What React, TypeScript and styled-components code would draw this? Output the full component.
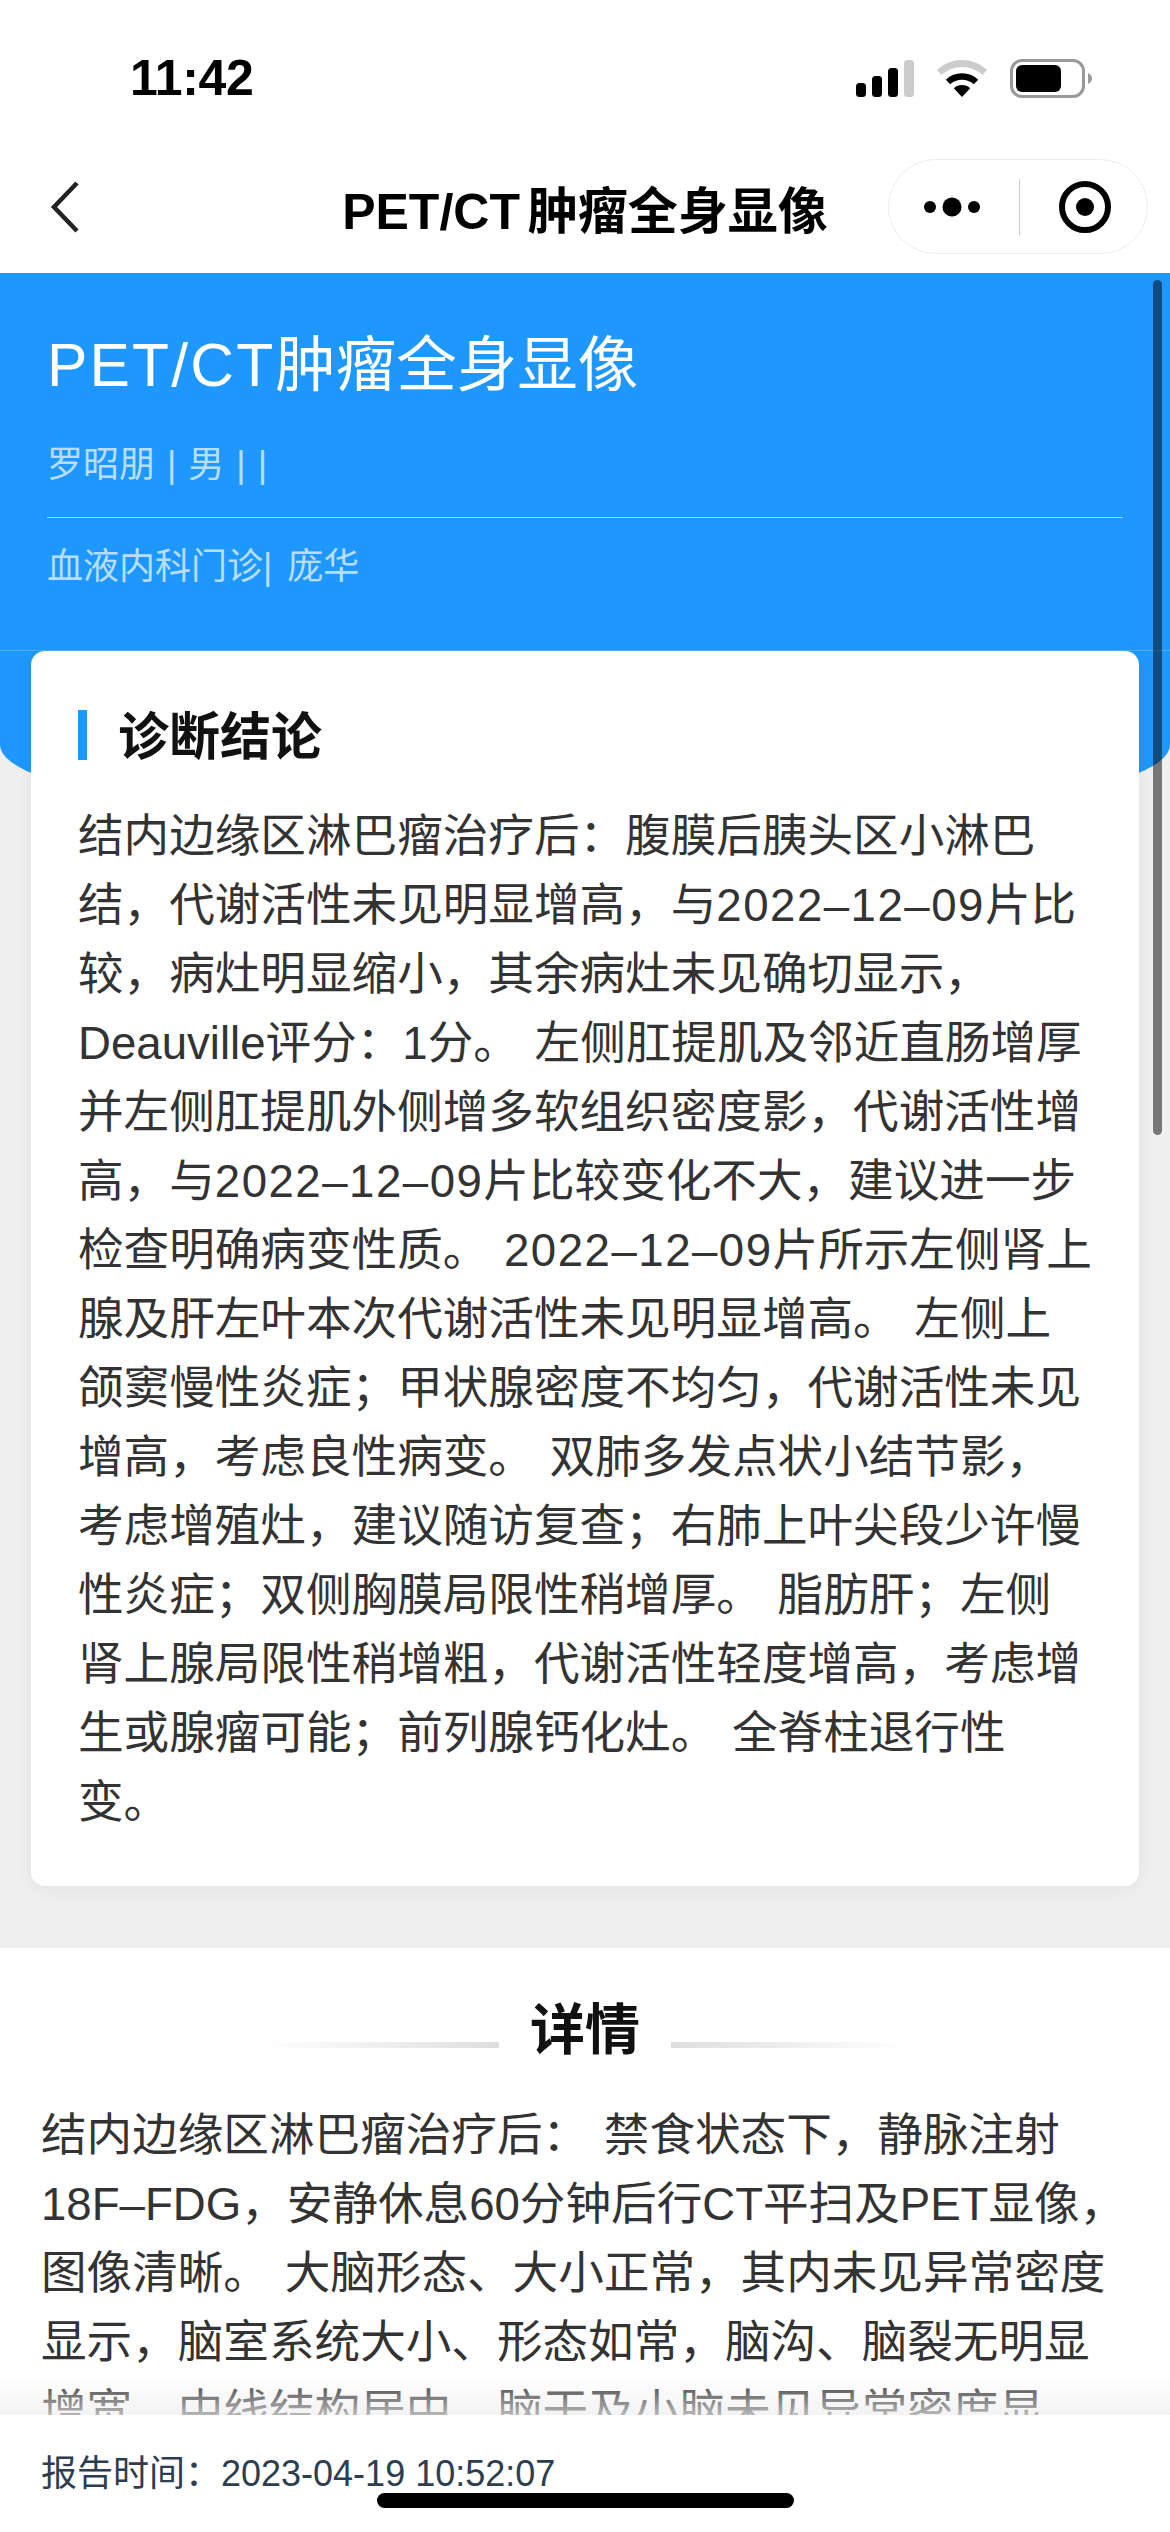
import * as React from 'react';
import styled, { createGlobalStyle } from 'styled-components';

const GlobalStyle = createGlobalStyle`
    html, body {
        margin: 0;
        padding: 0;
        background: #fff;
    }
`;

const Page = styled.div`
    display: flex;
    flex-direction: column;
    width: 1170px;
    height: 2532px;
    overflow: hidden;
    position: relative;
    background: #fff;
    font-family: 'Liberation Sans', 'Noto Sans CJK SC', sans-serif;
`;

const StatusBar = styled.div`
    display: flex;
    flex: none;
    align-items: center;
    justify-content: space-between;
    height: 156px;
    padding: 0 78px 0 130px;
`;

const Clock = styled.span`
    font-size: 50px;
    font-weight: 700;
    letter-spacing: -0.3px;
    color: #000;
`;

const StatusIcons = styled.div`
    display: flex;
    align-items: center;
    gap: 23px;
`;

const NavBar = styled.div`
    display: flex;
    flex: none;
    align-items: center;
    justify-content: space-between;
    position: relative;
    box-sizing: border-box;
    height: 117px;
    padding: 0 22px 16px 50px;
`;

const NavTitle = styled.div`
    position: absolute;
    top: 0;
    left: 0;
    right: 0;
    bottom: 16px;
    display: flex;
    align-items: center;
    justify-content: center;
    font-size: 50px;
    font-weight: 700;
    color: #000;
    white-space: pre;
    word-spacing: -6px;
`;

const Capsule = styled.div`
    display: flex;
    align-items: center;
    box-sizing: border-box;
    width: 260px;
    height: 95px;
    padding-left: 35px;
    border: 1px solid #ececec;
    border-radius: 48px;
    background: #fff;
    z-index: 1;
`;

const CapsuleLine = styled.div`
    width: 1px;
    height: 56px;
    margin: 0 39px;
    background: #cfcfcf;
`;

const Scroll = styled.div`
    flex: 1;
    min-height: 0;
    overflow: hidden;
    position: relative;
    background: #efefef;
`;

const ScrollThumb = styled.div`
    position: absolute;
    top: 7px;
    right: 8px;
    width: 9px;
    height: 855px;
    border-radius: 5px;
    background: rgba(0, 0, 0, 0.5);
`;

const Hero = styled.header`
    box-sizing: border-box;
    height: 559px;
    background: #1e98ff;
    border-radius: 0 0 50% 50% / 0 0 87px 87px;
`;

const HeroHead = styled.div`
    box-sizing: border-box;
    height: 378px;
    padding: 56px 47px 0 47px;
    border-bottom: 1px solid rgba(255, 255, 255, 0.22);
`;

const HeroTitle = styled.h1`
    margin: 0;
    font-size: 60.5px;
    line-height: 72px;
    font-weight: 400;
    color: #fff;
`;

const HeroTitleLatin = styled.span`
    letter-spacing: 2.2px;
`;

const HeroInfo = styled.div`
    font-size: 36px;
    line-height: 50px;
    word-spacing: 2px;
    color: rgba(255, 255, 255, 0.7);
`;

const PatientRow = styled(HeroInfo)`
    margin-top: 39px;
    padding-bottom: 27px;
    border-bottom: 1px solid rgba(255, 255, 255, 0.6);
`;

const DeptRow = styled(HeroInfo)`
    margin-top: 24px;
    word-spacing: 5px;
`;

const Card = styled.section`
    position: relative;
    box-sizing: border-box;
    margin: -181px 31px 62px;
    padding: 59px 47px 49px;
    border-radius: 14px;
    background: #fff;
    box-shadow: 0 4px 18px rgba(0, 0, 0, 0.05);
`;

const CardHeading = styled.h2`
    display: flex;
    align-items: center;
    gap: 31px;
    margin: 0 0 42px;
    font-size: 51px;
    line-height: 50px;
    font-weight: 700;
    color: #111;

    &::before {
        content: '';
        width: 9px;
        height: 50px;
        background: #1e98ff;
    }
`;

const CardHeadingText = styled.span`
    position: relative;
    top: 3px;
`;

const Body = styled.p`
    margin: 0;
    font-size: 45.6px;
    line-height: 69px;
    word-spacing: 3px;
    color: #333;
    white-space: pre;
`;

const DateText = styled.span`
    letter-spacing: 1.5px;
`;

const Details = styled.section`
    padding: 48px 41px 0;
    background: #fff;
`;

const DetailsHeading = styled.div`
    display: flex;
    align-items: center;
    justify-content: center;
    gap: 31px;
    margin-bottom: 37px;
    font-size: 55px;
    line-height: 68px;
    font-weight: 700;
    color: #111;
`;

const HeadingRule = styled.span<{ $flip?: boolean }>`
    width: 236px;
    height: 6px;
    margin-top: 30px;
    background: linear-gradient(
        ${props => (props.$flip ? 'to left' : 'to right')},
        rgba(221, 221, 221, 0),
        #dedede
    );
`;

const Footer = styled.footer`
    position: relative;
    flex: none;
    box-sizing: border-box;
    height: 117px;
    padding: 34px 41px 0;
    background: #fff;
    font-size: 36px;
    line-height: 50px;
    color: #2c3e50;

    &::before {
        content: '';
        position: absolute;
        left: 0;
        right: 0;
        bottom: 100%;
        height: 40px;
        background: linear-gradient(
            to bottom,
            rgba(255, 255, 255, 0),
            rgba(238, 238, 238, 0.7)
        );
    }
`;

const HomeIndicator = styled.div`
    position: absolute;
    left: 377px;
    bottom: 24px;
    width: 417px;
    height: 15px;
    border-radius: 8px;
    background: #000;
`;

const conclusion = [
    '结内边缘区淋巴瘤治疗后：腹膜后胰头区小淋巴',
    '结，代谢活性未见明显增高，与2022–12–09片比',
    '较，病灶明显缩小，其余病灶未见确切显示，',
    'Deauville评分：1分。 左侧肛提肌及邻近直肠增厚',
    '并左侧肛提肌外侧增多软组织密度影，代谢活性增',
    '高，与2022–12–09片比较变化不大，建议进一步',
    '检查明确病变性质。 2022–12–09片所示左侧肾上',
    '腺及肝左叶本次代谢活性未见明显增高。 左侧上',
    '颌窦慢性炎症；甲状腺密度不均匀，代谢活性未见',
    '增高，考虑良性病变。 双肺多发点状小结节影，',
    '考虑增殖灶，建议随访复查；右肺上叶尖段少许慢',
    '性炎症；双侧胸膜局限性稍增厚。 脂肪肝；左侧',
    '肾上腺局限性稍增粗，代谢活性轻度增高，考虑增',
    '生或腺瘤可能；前列腺钙化灶。 全脊柱退行性',
    '变。',
];

const details = [
    '结内边缘区淋巴瘤治疗后： 禁食状态下，静脉注射',
    '18F–FDG，安静休息60分钟后行CT平扫及PET显像，',
    '图像清晰。 大脑形态、大小正常，其内未见异常密度',
    '显示，脑室系统大小、形态如常，脑沟、脑裂无明显',
    '增宽，中线结构居中，脑干及小脑未见异常密度显',
];

// dates run a little wider than the rest of the latin text
const Lines: React.FC<{ lines: string[] }> = ({ lines }) => (
    <Body>
        {lines.map(line => (
            <React.Fragment key={line}>
                {line.split(/(\d{4}–\d{2}–\d{2})/).map((part, i) =>
                    i % 2 ? <DateText key={i}>{part}</DateText> : part
                )}
                <br />
            </React.Fragment>
        ))}
    </Body>
);

const SignalIcon = () => (
    <svg width="58" height="37" viewBox="0 0 58 37">
        <rect x="0" y="23" width="10" height="14" rx="3.5" fill="#000" />
        <rect x="16" y="16" width="10" height="21" rx="3.5" fill="#000" />
        <rect x="32" y="8" width="10" height="29" rx="3.5" fill="#000" />
        <rect x="48" y="0" width="10" height="37" rx="3.5" fill="#ccc" />
    </svg>
);

const WifiIcon = () => (
    <svg width="50" height="37" viewBox="0 0 50 37" fill="none">
        <path d="M2.2 12.5A33.5 33.5 0 0 1 47.8 12.5" stroke="#ccc" strokeWidth="7" />
        <path d="M11 22A20.5 20.5 0 0 1 39 22" stroke="#000" strokeWidth="6.5" />
        <path d="M25 37L16.8 28.2A12 12 0 0 1 33.2 28.2Z" fill="#000" />
    </svg>
);

const BatteryIcon = () => (
    <svg width="82" height="39" viewBox="0 0 82 39">
        <rect x="1.5" y="1.5" width="72" height="36" rx="10.5" fill="none" stroke="#999" strokeWidth="3" />
        <rect x="6" y="6" width="45" height="27" rx="6" fill="#000" />
        <path d="M78 14C80.5 15 82 17 82 19.5C82 22 80.5 24 78 25Z" fill="#999" />
    </svg>
);

const BackIcon = () => (
    <svg width="30" height="52" viewBox="0 0 30 52" fill="none">
        <path d="M27 2L4 26L27 50" stroke="#222" strokeWidth="4.5" />
    </svg>
);

const MoreIcon = () => (
    <svg width="56" height="20" viewBox="0 0 56 20">
        <circle cx="6" cy="10" r="6" fill="#000" />
        <circle cx="28" cy="10" r="9.5" fill="#000" />
        <circle cx="50" cy="10" r="6" fill="#000" />
    </svg>
);

const TargetIcon = () => (
    <svg width="52" height="52" viewBox="0 0 52 52">
        <circle cx="26" cy="26" r="23" fill="none" stroke="#000" strokeWidth="6" />
        <circle cx="26" cy="26" r="9" fill="#000" />
    </svg>
);

const App: React.FC = () => {
    return (
        <Page>
            <GlobalStyle />
            <StatusBar>
                <Clock>11:42</Clock>
                <StatusIcons>
                    <SignalIcon />
                    <WifiIcon />
                    <BatteryIcon />
                </StatusIcons>
            </StatusBar>
            <NavBar>
                <BackIcon />
                <NavTitle>PET/CT 肿瘤全身显像</NavTitle>
                <Capsule>
                    <MoreIcon />
                    <CapsuleLine />
                    <TargetIcon />
                </Capsule>
            </NavBar>
            <Scroll>
                <Hero>
                    <HeroHead>
                        <HeroTitle>
                            <HeroTitleLatin>PET/CT</HeroTitleLatin>肿瘤全身显像
                        </HeroTitle>
                        <PatientRow>罗昭朋 | 男 | |</PatientRow>
                        <DeptRow>血液内科门诊| 庞华</DeptRow>
                    </HeroHead>
                </Hero>
                <Card>
                    <CardHeading>
                        <CardHeadingText>诊断结论</CardHeadingText>
                    </CardHeading>
                    <Lines lines={conclusion} />
                </Card>
                <Details>
                    <DetailsHeading>
                        <HeadingRule />
                        详情
                        <HeadingRule $flip />
                    </DetailsHeading>
                    <Lines lines={details} />
                </Details>
                <ScrollThumb />
            </Scroll>
            <Footer>报告时间：2023-04-19 10:52:07</Footer>
            <HomeIndicator />
        </Page>
    );
};

export default App;
